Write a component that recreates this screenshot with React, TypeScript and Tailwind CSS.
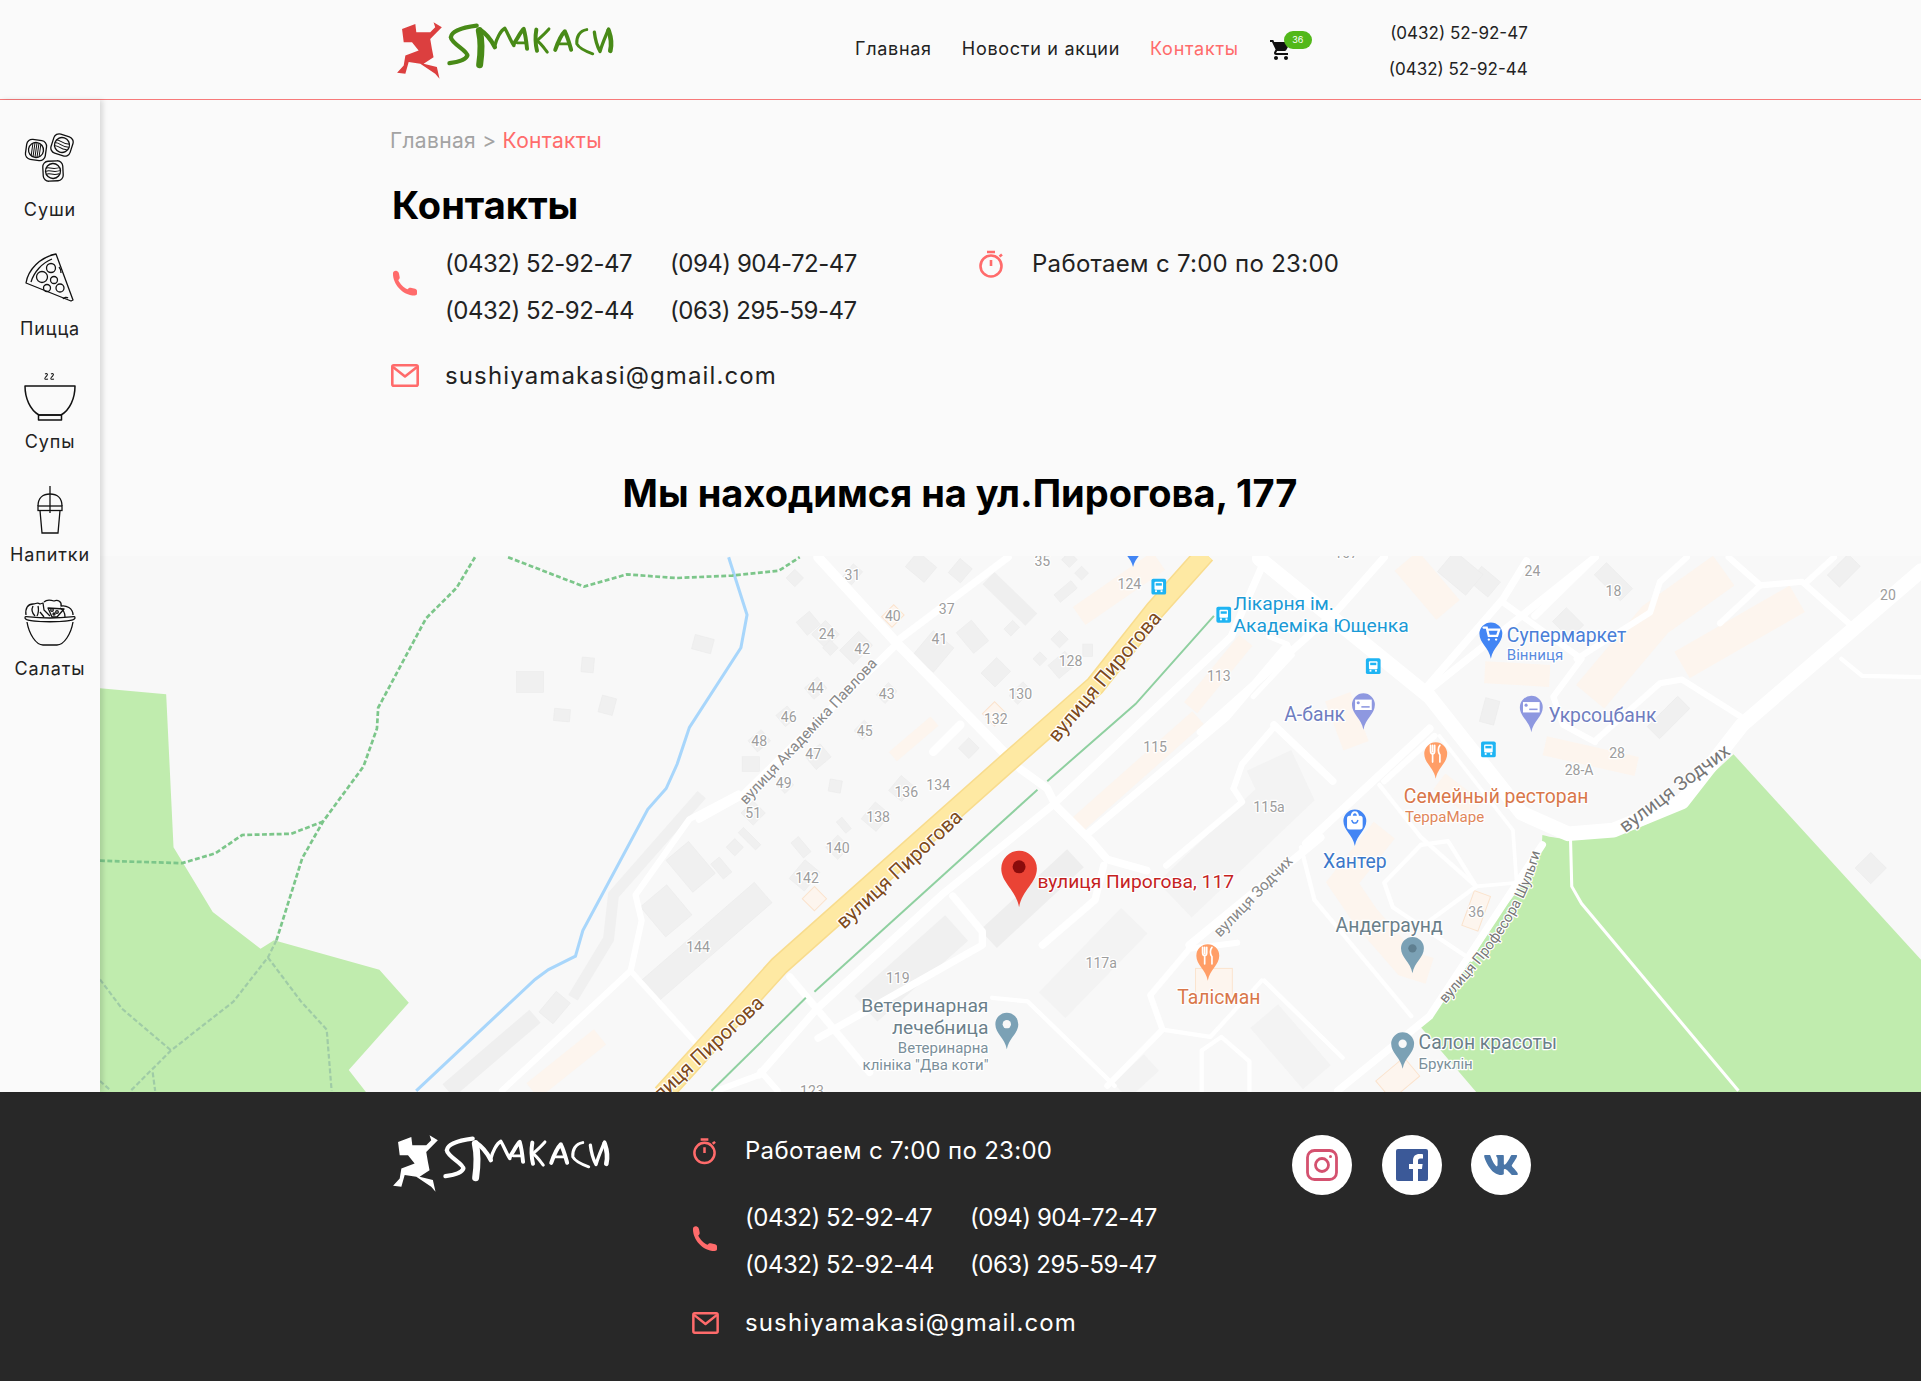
import { MdShoppingCart } from "react-icons/md";
import { FaVk } from "react-icons/fa";

const W = "#ffffff";
type P = number[];
const pts = (a: P) => { let s = ""; for (let i = 0; i < a.length; i += 2) s += a[i] + "," + a[i + 1] + " "; return s; };

const roads: [number, P][] = [
  [8, [668,455,733,526,826,621]], [6.5, [833,628,855,644,862,658,891,687,904,702,936,711]],
  [6, [733,523,823,455]], [6, [571,669,607,649,729,529]], [7, [784,592,762,614]],
  [6, [667,824,771,729,859,658,1005,520,1030,463]], [6, [888,681,1001,586,1049,529]],
  [12, [1028,456,1167,569,1242,664,1280,681,1317,678,1373,655,1422,592,1568,466]],
  [6.5, [971,772,1078,684,1066,689,1167,595]], [6, [1167,563,1302,455]],
  [6, [1092,891,1167,830,1259,690]], [4, [1023,569,1055,535,1051,526,1036,520]],
  [6, [1040,592,1088,638]], [5, [1007,644,1014,624,1039,595]], [5, [1007,644,1014,655,952,707]],
  [6, [851,772,894,735,901,707]], [6, [778,732,802,761,802,772,668,848]], [6, [645,798,667,824,710,876]],
  [3.5, [810,815,839,818,910,887]], [5, [904,887,949,841,939,813,971,775,1010,770]], [3.5, [949,841,988,847,1030,801]],
  [3.5, [981,891,981,858,997,847,1020,867,1020,891]], [3.5, [1062,692,1073,735,1152,830]], [3.5, [1032,801,1096,864]],
  [3.5, [1126,641,1160,684,1205,724]], [3.5, [1160,690,1130,721,1137,741,1201,784]], [3.5, [1160,690,1182,687,1205,724,1167,752]],
  [3, [1205,724,1238,721]], [3, [1175,601,1235,678,1238,721,1201,781]], [5, [1130,638,1171,601]],
  [6, [1163,563,1227,489,1246,458]], [6, [1253,503,1302,455]], [5, [1227,492,1291,538,1268,569,1276,592,1302,606]],
  [5, [1287,538,1347,500,1355,475,1377,455]], [5, [1302,605,1355,558,1373,555,1422,586]],
  [5, [1437,478,1404,509]], [5, [1411,455,1437,478,1471,475,1509,509]], [5, [1475,475,1497,455]], [3.5, [1503,538,1520,552,1568,553]],
  [5, [603,648,563,669,519,731,524,752,515,793,410,891]], [4.5, [515,793,570,854]], [5, [621,875,635,891]], [6, [620,878,667,824]], [5, [585,891,620,878]],
  [6, [1130,455,1092,498,980,598]],
];

const grey: P[] = [
  [433,557,22,17,0],[480,543,10,12,5],[574,526,16,12,15],[459,584,13,10,5],[496,576,12,14,15],[613,624,14,12,0],
  [564,708,24,34,-40],[589,709,9,16,-40],[544,744,28,32,-40],[576,770,125,22,-41],[453,823,15,22,40],
  [752,463,20,16,40],[784,466,13,15,40],[794,520,16,22,-40],[762,532,22,26,40],[813,549,16,18,45],[826,513,8,10,45],
  [865,522,10,10,45],[870,483,18,8,-40],[883,468,8,8,45],[873,457,9,9,45],[888,531,8,10,0],[849,538,8,8,45],[867,543,18,14,-40],
  [833,566,10,16,45],[791,611,12,12,45],[682,642,10,10,10],[736,644,14,16,40],[668,618,16,14,-40],[715,667,16,18,40],[689,674,6,12,-40],
  [684,692,14,14,45],[654,692,8,16,-40],[657,715,16,20,40],[641,641,10,10,45],[615,664,14,14,45],[612,685,6,20,-45],[600,692,10,10,45],
  [666,562,14,12,-40],[642,585,12,12,-40],[620,605,14,12,-40],[660,509,14,14,-40],[674,518,16,16,45],[699,529,16,22,45],[678,529,9,9,45],
  [724,566,10,14,45],[705,596,10,12,45],[696,469,10,14,40],[649,472,10,10,45],[1362,586,35,14,-45],[1212,475,20,16,40],[1216,581,12,20,15],
  [1527,709,18,18,45],[1317,475,30,14,45],[1505,466,24,14,-45],[1280,509,20,16,45],[1192,468,30,22,40],
];
const orangeBoxes: P[] = [[729,503,12,14,45],[812,583,14,14,45],[665,734,14,14,45],[1205,744,14,30,20],[1141,881,30,20,-40],[991,804,30,26,0]];
const orangeLines: [number, P][] = [
  [10,[763,589,729,618]],[18,[946,458,881,503]],[14,[978,586,878,675]],[14,[1017,523,972,578]],
  [30,[1407,466,1351,506,1298,569]],[25,[1467,489,1373,543]],[18,[1212,549,1265,552]],[16,[1261,609,1336,626]],[25,[1148,458,1182,498]],
  [22,[1092,569,1107,609]],[22,[1130,678,1096,721,1115,749,1148,787,1167,793]],[16,[1175,638,1205,661]],[16,[490,847,435,891]],
];
const greyLines: [number, P, string][] = [
  [9,[573,649,501,731,497,767,468,815],"#f0f0f0"],[14,[437,830,366,891],"#efefef"],[28,[781,758,707,824],"#f0f0f0"],
  [20,[878,701,807,767],"#eeeeee"],[30,[926,752,859,821],"#f3f3f3"],[40,[1036,621,1049,649,959,735],"#f3f3f3"],[14,[807,472,842,506],"#efefef"],
  [30,[1032,830,1075,880],"#f3f3f3"],[18,[940,868,915,891],"#f3f3f3"],
];

type Glyph = "dot" | "cart" | "fork" | "note" | "bag";
const Pin = ({ x, y, s, c, g = "dot", d = "#ffffff" }: { x: number; y: number; s: number; c: string; g?: Glyph; d?: string }) => (
  <g transform={`translate(${x} ${y}) scale(${s})`}>
    <path d="M0 0C-2-11-11-15-11-24A11 11 0 1 1 11-24C11-15 2-11 0 0Z" fill={c} />
    {g === "dot" && <circle cx="0" cy="-24" r="4" fill={d} />}
    {g === "cart" && <path d="M-7-30h3l2 8h8l2-6h-11M-2-18.500h.1M5-18.500h.1" fill="none" stroke="#fff" strokeWidth="2.200" strokeLinecap="round" />}
    {g === "fork" && <path d="M-5-32v5c0 2 1 3 2 3v8M-3-32v6M-1-32v5c0 2-1 3-2 3M4-32c-2 2-2 7 0 9v7" fill="none" stroke="#fff" strokeWidth="1.600" strokeLinecap="round" />}
    {g === "note" && <g><rect x="-8" y="-29" width="16" height="10" fill="#fff" /><circle cx="-5" cy="-26" r="1.500" fill={c} /><path d="M-2-22h8" stroke={c} strokeWidth="1.500" /></g>}
    {g === "bag" && <g fill="none" stroke="#fff" strokeWidth="2"><rect x="-6.500" y="-28" width="13" height="11" rx="1.500" fill="#fff" /><path d="M-3-28c0-6 6-6 6 0" /><path d="M-3-25c1 4 5 4 6 0" stroke={c} strokeWidth="1.300" /></g>}
  </g>
);
const Bus = ({ x, y }: { x: number; y: number }) => (
  <g transform={`translate(${x} ${y})`}>
    <rect x="-6" y="-6.500" width="12" height="13" rx="1.500" fill="#1eb4f3" />
    <rect x="-3.500" y="-4" width="7" height="6.500" rx=".8" fill="#fff" />
    <rect x="-2.500" y="-2.800" width="5" height="2" fill="#1eb4f3" />
    <rect x="-3" y="3" width="1.500" height="1.500" fill="#fff" /><rect x="1.500" y="3" width="1.500" height="1.500" fill="#fff" />
  </g>
);
const L = ({ x, y, t, size = 10.5, c = "#9a9a9a", r = 0, anchor = "middle" }: { x: number; y: number; t: string; size?: number; c?: string; r?: number; anchor?: "middle" | "start" | "end" }) => (
  <text x={x} y={y} fontSize={size} fill={c} textAnchor={anchor} stroke="#ffffff" strokeWidth={2} paintOrder="stroke" strokeLinejoin="round"
    transform={r ? `rotate(${r} ${x} ${y})` : undefined} fontFamily="Roboto, sans-serif">{t}</text>
);
const ROAD = [984,452,943,498,894,560,826,620,636,789,571,861,541,894];

const MapView = () => (
  <svg className="block w-full h-[536px]" viewBox="82 454 1486 438" preserveAspectRatio="none">
    <defs><path id="shulhy" d="M1180 820C1215 780 1248 745 1260 684" /></defs>
    <rect x="82" y="454" width="1486" height="438" fill="#f8f8f8" />
    <polygon fill="#c0ecae" points="82,562 136,567 142,692 174,745 213,775 224,768 310,792 334,819 285,874 299,892 82,892" />
    <path fill="#c0ecae" d="M1259 682C1280 688 1330 690 1373 655L1415 616 1568 784V892H1205L1159 838 1225 745C1250 715 1259 700 1259 682Z" />
    <polyline fill="none" stroke="#fff" strokeWidth="2.500" points={pts([1282,686,1283,724,1291,738,1419,891])} />
    {greyLines.map(([w, p, c], i) => <polyline key={i} fill="none" stroke={c} strokeWidth={w} points={pts(p)} />)}
    {grey.map(([x, y, w, h, r], i) => <rect key={i} x={x - w / 2} y={y - h / 2} width={w} height={h} fill="#f0f0f0" stroke="#ebebeb" strokeWidth=".5" transform={`rotate(${r} ${x} ${y})`} />)}
    {orangeLines.map(([w, p], i) => <polyline key={i} fill="none" stroke="#fdf5ee" strokeWidth={w} points={pts(p)} />)}
    {orangeBoxes.map(([x, y, w, h, r], i) => <rect key={i} x={x - w / 2} y={y - h / 2} width={w} height={h} fill="#fdf5ee" stroke="#fbe3cd" strokeWidth=".8" transform={`rotate(${r} ${x} ${y})`} />)}
    {roads.map(([w, p], i) => <polyline key={i} fill="none" stroke={W} strokeWidth={w} strokeLinecap="round" strokeLinejoin="round" points={pts(p)} />)}
    <polyline fill="none" stroke="#a8d6fb" strokeWidth="2.500" points={pts([595,455,610,502,605,529,563,594,553,624,544,644,529,661,476,760,470,781,448,792,437,800,340,891])} />
    <g fill="none" stroke="#7cc68a" strokeWidth="2.200" strokeDasharray="4 2">
      <polyline points={pts([388,455,373,480,348,505,309,578,308,595,297,626,264,671,247,701,226,768])} />
      <polyline points={pts([415,455,477,479,512,469,552,472,598,470,636,466,653,455])} />
      <polyline points={pts([82,703,149,705,176,697,198,682,238,681,264,671])} />
    </g>
    <g fill="none" stroke="#9fcba6" strokeWidth="1.800" strokeDasharray="4 2">
      <polyline points={pts([226,768,219,782,191,818,140,858,107,891])} />
      <polyline points={pts([219,782,246,818,267,841,271,891])} />
      <polyline points={pts([82,800,100,824,140,858])} />
      <polyline points={pts([125,876,127,891])} /><polyline points={pts([82,883,91,891])} />
    </g>
    <g fill="none" stroke="#8fd0a0" strokeWidth="1.600">
      <polyline points={pts([991,503,927,575,855,638])} /><polyline points={pts([847,645,665,810])} /><polyline points={pts([658,815,581,891])} />
    </g>
    <polyline fill="none" stroke="#f8dc8e" strokeWidth="17" points={pts(ROAD)} />
    <polyline fill="none" stroke="#fee9a3" strokeWidth="14.500" points={pts(ROAD)} />

    <L x={906} y={556} t="вулиця Пирогова" size={16.5} c="#7d4a1c" r={-50} />
    <L x={738} y={714} t="вулиця Пирогова" size={16.5} c="#7d4a1c" r={-43} />
    <L x={576} y={866} t="вулиця Пирогова" size={16.5} c="#7d4a1c" r={-43} />
    <L x={663} y={600} t="вулиця Академіка Павлова" size={12.3} c="#888" r={-47} />
    <L x={1370} y={648} t="вулиця Зодчих" size={15.7} c="#777" r={-37} />
    <L x={1026} y={735} t="вулиця Зодчих" size={12.5} c="#888" r={-46} />
    <text fontSize={11.7} fill="#777" stroke="#ffffff" strokeWidth={2} paintOrder="stroke" strokeLinejoin="round" fontFamily="Roboto, sans-serif">
      <textPath href="#shulhy">вулиця Професора Шульги</textPath>
    </text>

    {([[851,462,"35"],[696,474,"31"],[922,481,"124"],[729,507,"40"],[773,501,"37"],[767,526,"41"],[675,522,"24"],[704,534,"42"],[874,544,"128"],[666,566,"44"],[724,571,"43"],[833,571,"130"],[813,591,"132"],[644,590,"46"],[706,601,"45"],[620,609,"48"],[664,620,"47"],[943,614,"115"],[995,556,"113"],[640,644,"49"],[766,645,"134"],[740,651,"136"],[615,668,"51"],[717,671,"138"],[684,697,"140"],[659,721,"142"],[570,778,"144"],[733,803,"119"],[899,791,"117а"],[663,895,"123"],[1036,663,"115а"],[1251,470,"24"],[1317,487,"18"],[1541,490,"20"],[1289,633,"28-А"],[1320,619,"28"],[1205,749,"36"],[1099,456,"107"]] as [number, number, string][]).map(([x, y, t], i) => <L key={i} x={x} y={y} t={t} size={11.5} c="#9d9d9d" />)}

    <Pin x={925} y={463} s={0.6} c="#4285f4" />
    <Bus x={946} y={479} /><Bus x={999} y={502} /><Bus x={1121} y={544} /><Bus x={1215} y={612} />
    <L x={1007} y={498} t="Лікарня ім." size={15.7} c="#1a9ad6" anchor="start" />
    <L x={1007} y={516} t="Академіка Ющенка" size={15.7} c="#1a9ad6" anchor="start" />
    <Pin x={1217} y={538} s={0.85} c="#4285f4" g="cart" />
    <L x={1230} y={524} t="Супермаркет" size={15.8} c="#4a7fd8" anchor="start" />
    <L x={1230} y={539} t="Вінниця" size={12.3} c="#5a8be0" anchor="start" />
    <Pin x={1113} y={596} s={0.85} c="#8e98e0" g="note" />
    <L x={1098} y={589} t="А-банк" size={15.8} c="#6f7dc0" anchor="end" />
    <Pin x={1250} y={598} s={0.85} c="#8e98e0" g="note" />
    <L x={1264} y={590} t="Укрсоцбанк" size={15.8} c="#6f7dc0" anchor="start" />
    <Pin x={1172} y={636} s={0.85} c="#ff9e67" g="fork" />
    <L x={1146} y={656} t="Семейный ресторан" size={15.8} c="#d9774a" anchor="start" />
    <L x={1147} y={671} t="ТерраМаре" size={12.3} c="#e0865a" anchor="start" />
    <Pin x={1106} y={691} s={0.85} c="#4285f4" g="bag" />
    <L x={1106} y={709} t="Хантер" size={15.8} c="#3b78c9" />
    <L x={1134} y={761} t="Андеграунд" size={15.8} c="#6b7f8a" />
    <Pin x={1153} y={795} s={0.85} c="#7ba1b5" d="#5f7f90" />
    <Pin x={986} y={801} s={0.85} c="#ff9e67" g="fork" />
    <L x={995} y={820} t="Талісман" size={15.8} c="#d9774a" />
    <Pin x={1145} y={873} s={0.85} c="#7ba1b5" d="#f8f8f8" />
    <L x={1158} y={857} t="Салон красоты" size={15.8} c="#6b7f8a" anchor="start" />
    <L x={1158} y={873} t="Бруклін" size={12.3} c="#7b8f9a" anchor="start" />
    <Pin x={822} y={857} s={0.85} c="#7ba1b5" d="#f8f8f8" />
    <L x={807} y={827} t="Ветеринарная" size={15.7} c="#6b7f8a" anchor="end" />
    <L x={807} y={845} t="лечебница" size={15.7} c="#6b7f8a" anchor="end" />
    <L x={807} y={860} t="Ветеринарна" size={12.2} c="#7b8f9a" anchor="end" />
    <L x={807} y={874} t='клініка "Два коти"' size={12.2} c="#7b8f9a" anchor="end" />
    <g transform="translate(832 741) scale(1.32)">
      <path d="M0 0C-2-11-11-15-11-24A11 11 0 1 1 11-24C11-15 2-11 0 0Z" fill="#ea4335" />
      <circle cx="0" cy="-25" r="4" fill="#8a0c0c" />
    </g>
    <L x={847} y={725} t="вулиця Пирогова, 117" size={15.7} c="#c5221f" anchor="start" />
  </svg>
);

const Logo = ({ body, text }: { body: string; text: string }) => (
  <svg viewBox="45 60 670 190" className="w-[223px] h-[63px] block">
    <polygon fill={body} points="65,90 105,75 108,100 150,100 165,85 160,70 185,85 150,120 155,150 160,175 130,195 170,205 178,240 165,225 120,195 85,190 75,225 50,222 70,200 75,170 115,155 95,130 70,130" />
    <g fill="none" stroke={text} strokeLinecap="round" strokeLinejoin="round">
      <path strokeWidth="13" d="M290 80C250 85 215 95 212 115 215 135 262 155 262 170 258 185 230 190 208 193" />
      <path strokeWidth="21" d="M298 95C306 130 303 170 299 198" />
      <path strokeWidth="13" d="M300 92C320 105 335 125 345 145" />
      <path strokeWidth="10" d="M345 140C350 120 362 95 375 88 385 105 392 125 402 140" />
      <path strokeWidth="12" d="M402 135C415 115 425 95 432 90 438 110 440 130 442 150" />
      <path strokeWidth="9" d="M412 132H440" />
      <path strokeWidth="12" d="M470 92C466 115 468 140 472 156" />
      <path strokeWidth="9" d="M508 90C495 105 480 118 472 125 485 135 495 150 503 160" />
      <path strokeWidth="12" d="M527 153C535 130 548 105 556 97 565 115 570 135 575 153" />
      <path strokeWidth="8" d="M535 135H568" />
      <path strokeWidth="9" d="M622 92C600 95 590 115 592 135 600 150 620 158 640 165" />
      <path strokeWidth="10" d="M645 100C648 125 655 145 662 158 670 130 680 110 688 90" />
      <path strokeWidth="14" d="M688 95C695 115 697 140 693 156" />
    </g>
  </svg>
);

const Timer = ({ className = "" }: { className?: string }) => (
  <svg viewBox="0 0 26 28" fill="none" stroke="#ff6b6b" strokeWidth="2.600" className={className}>
    <circle cx="13" cy="16" r="10.500" /><path d="M9 2h8M13 10v6" /><path d="M21.500 6.500l2.500-2" />
  </svg>
);
const Handset = ({ className = "" }: { className?: string }) => (
  <svg viewBox="0 0 26 26" fill="#ff6b6b" className={className}>
    <path d="M1 3C1 1 3 0 5 .5 6.500 1 7 2 7.300 3.500L8 7C8.200 8.300 7.500 9.200 6.500 9.800 8.300 13.600 12 18 16.500 19.500 17.200 18.300 18.200 17.800 19.500 18L24 19C25.500 19.500 26 20.300 26 21.500V24C26 25.500 25 26 23.500 26 10.500 25.500 1 14 1 3Z" />
  </svg>
);
const Mail = ({ className = "" }: { className?: string }) => (
  <svg viewBox="0 0 28 23" fill="none" stroke="#ff6b6b" strokeWidth="2.600" strokeLinejoin="round" className={className}>
    <rect x="1.300" y="1.300" width="25.400" height="20.400" rx="1.500" /><path d="M2 3l12 9.500L26 3" />
  </svg>
);

const Phones = ({ color }: { color: string }) => (
  <div className={`grid grid-cols-[225px_auto] gap-y-[14px] text-[24px] leading-[33px] tracking-[-0.02em] ${color}`}>
    <span>(0432) 52-92-47</span><span>(094) 904-72-47</span>
    <span>(0432) 52-92-44</span><span>(063) 295-59-47</span>
  </div>
);

const SushiIcon = () => (
  <svg viewBox="0 0 52 50" className="w-[52px] h-[50px]" fill="none" stroke="#111" strokeWidth="1.300">
    <g transform="rotate(8 12 17)"><rect x="2" y="7" width="20" height="20" rx="5.500" /><circle cx="12" cy="17" r="7.500" /><path d="M8 11v12M10 10v14M12 10v14M14 10v14M16 11v12" strokeWidth="1" /></g>
    <g transform="rotate(18 38 12)"><rect x="28" y="2" width="20" height="20" rx="5.500" /><circle cx="38" cy="12" r="7.500" /><path d="M31 9c3-2 5 2 14 0M31 12c4-2 6 2 14 0M31 15c4-2 6 2 13 0" strokeWidth="1" /></g>
    <g transform="rotate(-3 29 38)"><rect x="19" y="28" width="20" height="20" rx="5.500" /><circle cx="29" cy="38" r="7.500" /><path d="M22 35c3-2 5 2 14 0M22 38c4-2 6 2 14 0M22 41c4-2 6 2 13 0" strokeWidth="1" /></g>
  </svg>
);
const PizzaIcon = () => (
  <svg viewBox="0 0 50 50" className="w-[50px] h-[50px]" fill="none" stroke="#111" strokeWidth="1.300" strokeLinejoin="round">
    <path d="M1 30C3 17 15 4 31 1L48 47 46 48Z" /><path d="M6 29C9 19 17 10 27 6" />
    <circle cx="26" cy="15" r="4.500" /><circle cx="17" cy="24" r="5.500" /><circle cx="29" cy="27" r="3.500" /><circle cx="22" cy="35" r="3.500" /><circle cx="35" cy="35" r="4" /><path d="M34 14c1 1 2 4 2 6" /><path d="M38 46c1-2 4-2 5-1" />
  </svg>
);
const SoupIcon = () => (
  <svg viewBox="0 0 52 50" className="w-[52px] h-[50px]" fill="none" stroke="#111" strokeWidth="1.500" strokeLinejoin="round">
    <path d="M1 14H51C51 26 46 38 37 43H15C6 38 1 26 1 14Z" /><rect x="14.500" y="43" width="23" height="5" />
    <path d="M21 2c2-1 3 0 2 1.500S20 6 21 7c1 .5 2 .3 3 0M27 2c2-1 3 0 2 1.500S26 6 27 7c1 .5 2 .3 3 0" strokeWidth="1.100" />
  </svg>
);
const DrinkIcon = () => (
  <svg viewBox="0 0 26 48" className="w-[26px] h-[48px]" fill="none" stroke="#111" strokeWidth="1.300">
    <path d="M13 0V27" /><path d="M1 20C1 12 6 8 13 8S25 12 25 20" /><rect x="1" y="20" width="24" height="4.500" /><path d="M3 24.500L5 47H21L23 24.500" />
  </svg>
);
const SaladIcon = () => (
  <svg viewBox="0 0 52 48" className="w-[52px] h-[48px]" fill="none" stroke="#111" strokeWidth="1.300" strokeLinejoin="round">
    <path d="M1 20C1 17 3 20 26 20 49 20 51 17 51 20 51 25 1 25 1 20Z" /><path d="M3 24C5 36 12 47 19 47H33C40 47 47 36 49 24" />
    <path d="M2 17C1 10 4 6 9 6 12 6 13 4 16 6L19 5 20 12 26 18" /><path d="M9 8C7 12 9 16 11 18M14 8C15 12 14 16 13 18" /><path d="M20 4C23 1 27 2 30 3 34 1 38 4 37 8 42 7 49 10 49 17" />
    <path d="M24 10L40 11 33 19 28 19Z" /><circle cx="28" cy="12" r="1.300" /><circle cx="33" cy="14" r="1.300" /><circle cx="30" cy="16" r="1" />
    <path d="M36 10C40 12 41 16 41 19M16 14L20 19" />
  </svg>
);

const side = [
  { t: "Суши", I: SushiIcon, h: "h-[119px]", ic: "", lb: "mt-[15px]" },
  { t: "Пицца", I: PizzaIcon, h: "h-[113px]", ic: "mt-[1px]", lb: "mt-[14px]" },
  { t: "Супы", I: SoupIcon, h: "h-[114px]", ic: "mt-[7px]", lb: "mt-[8px]" },
  { t: "Напитки", I: DrinkIcon, h: "h-[114px]", ic: "mt-[6px]", lb: "mt-[8px]" },
  { t: "Салаты", I: SaladIcon, h: "h-[113px]", ic: "mt-[4px]", lb: "mt-[10px]" },
];

export default function App() {
  return (
    <div className="font-['Inter',sans-serif] bg-[#fafafa] text-[#222] w-[1921px]">
      <header className="h-[100px] border-b border-[#f77a7a] flex items-center pl-[395px]">
        <div className="w-[460px] pt-[2px]"><Logo body="#dc3f3f" text="#488a17" /></div>
        <nav className="flex items-center gap-[30px] text-[18px] tracking-[0.04em] leading-[24px] -mt-[2px]">
          <span>Главная</span><span>Новости и акции</span><span className="text-[#ff6b6b]">Контакты</span>
        </nav>
        <div className="relative ml-[31px] w-[41px] h-[24px] text-[#111]">
          <MdShoppingCart className="w-[24px] h-[24px] -ml-[1px]" />
          <span className="absolute left-[14px] -top-[7px] w-[28px] h-[18px] rounded-[9px] bg-[#52b81a] text-white text-[9px] leading-[18px] text-center">36</span>
        </div>
        <div className="w-[217px] flex flex-col items-end gap-[12px] text-[17px] leading-[24px] mt-[3px]">
          <span>(0432) 52-92-47</span><span>(0432) 52-92-44</span>
        </div>
      </header>
      <div className="flex">
        <aside className="relative z-10 w-[100px] shrink-0 bg-[#fafafa] shadow-[3px_0_5px_rgba(0,0,0,0.13)] flex flex-col items-center pt-[33px]">
          {side.map(({ t, I, h, ic, lb }) => (
            <div key={t} className={`${h} flex flex-col items-center`}>
              <div className={`h-[50px] flex items-center ${ic}`}><I /></div>
              <span className={`text-[18px] leading-[24px] tracking-[0.05em] ${lb}`}>{t}</span>
            </div>
          ))}
        </aside>
        <main className="flex-1 min-w-0">
          <section className="h-[456px] ml-[290px] w-[1140px] pt-[27px]">
            <div className="text-[21px] leading-[28px] tracking-[0.015em] text-[#a3a3a3]">Главная &gt; <span className="text-[#ff6b6b]">Контакты</span></div>
            <h1 className="ml-[2px] mt-[28px] text-[38px] leading-[44px] font-bold text-black">Контакты</h1>
            <div className="flex mt-[20px] h-[80px]">
              <div className="w-[55px] flex items-center pl-[2px] pb-[8px]"><Handset className="w-[25px] h-[28px]" /></div>
              <div className="w-[533px]"><Phones color="text-[#222]" /></div>
              <Timer className="w-[26px] h-[28px] mt-[3px]" />
              <span className="ml-[28px] text-[24px] leading-[33px] tracking-[0.012em]">Работаем с 7:00 по 23:00</span>
            </div>
            <div className="flex items-center mt-[32px] h-[33px]">
              <div className="w-[55px] pl-[1px]"><Mail className="w-[28px] h-[23px]" /></div>
              <span className="text-[24px] leading-[33px] tracking-[0.047em]">sushiyamakasi@gmail.com</span>
            </div>
            <h2 className="mt-[79px] text-center text-[38px] leading-[44px] font-bold text-black">Мы находимся на ул.Пирогова, 177</h2>
          </section>
          <MapView />
        </main>
      </div>
      <footer className="h-[289px] bg-[#282828] flex pl-[391px] pt-[40px] text-white">
        <div className="w-[301px]"><Logo body="#ffffff" text="#ffffff" /></div>
        <div className="w-[600px]">
          <div className="flex items-center h-[33px] mt-[2px]">
            <div className="w-[53px]"><Timer className="w-[25px] h-[28px]" /></div>
            <span className="text-[24px] leading-[33px] tracking-[0.012em]">Работаем с 7:00 по 23:00</span>
          </div>
          <div className="flex items-center h-[80px] mt-[34px]">
            <div className="w-[53px] pb-[6px]"><Handset className="w-[25px] h-[25px]" /></div>
            <Phones color="text-white" />
          </div>
          <div className="flex items-center h-[33px] mt-[25px]">
            <div className="w-[53px]"><Mail className="w-[27px] h-[22px]" /></div>
            <span className="text-[24px] leading-[33px] tracking-[0.047em]">sushiyamakasi@gmail.com</span>
          </div>
        </div>
        <div className="flex gap-[30px] h-[60px] mt-[3px]">
          <div className="w-[60px] h-[60px] rounded-full bg-white flex items-center justify-center">
            <svg viewBox="0 0 32 32" className="w-[32px] h-[32px]" fill="none" stroke="#d4516f" strokeWidth="2.800">
              <rect x="1.500" y="1.500" width="29" height="29" rx="7" /><circle cx="16" cy="16" r="6.500" /><circle cx="24.500" cy="7.500" r="1.500" fill="#d4516f" stroke="none" />
            </svg>
          </div>
          <div className="w-[60px] h-[60px] rounded-full bg-white flex items-center justify-center">
            <svg viewBox="0 0 32 32" className="w-[32px] h-[32px]">
              <rect width="32" height="32" rx="2" fill="#3b5998" />
              <path fill="#fff" d="M22 32V20h4l.6-5H22v-3c0-1.500.4-2.400 2.400-2.400H27V5.200C26.500 5.100 25 5 23.300 5 19.700 5 17 7.200 17 11.400V15h-4v5h4v12z" />
            </svg>
          </div>
          <div className="w-[60px] h-[60px] rounded-full bg-white flex items-center justify-center -ml-[1px]"><FaVk className="w-[36px] h-[36px] text-[#4a76a8]" /></div>
        </div>
      </footer>
    </div>
  );
}
